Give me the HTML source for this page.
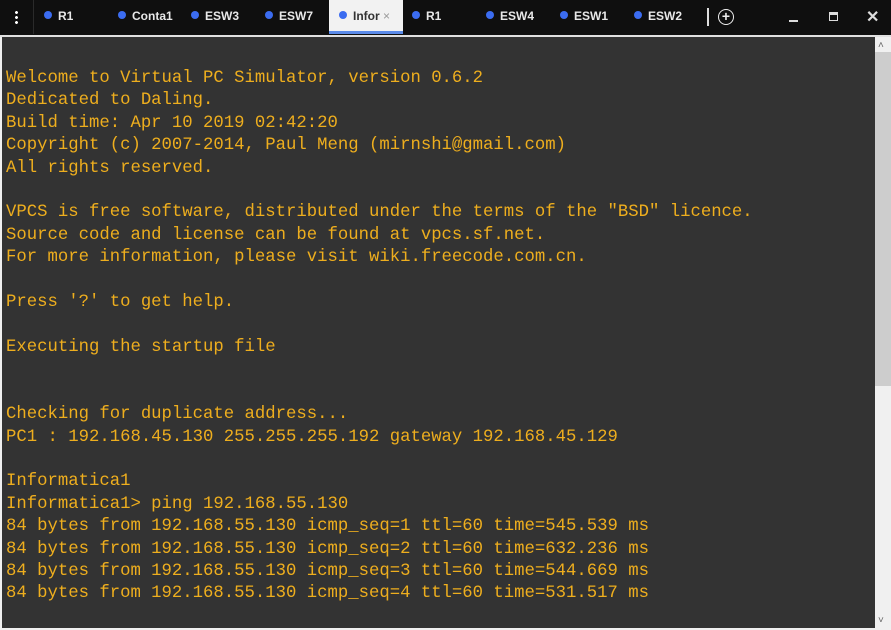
<!DOCTYPE html>
<html><head><style>
*{margin:0;padding:0;box-sizing:border-box}
body{width:891px;height:630px;background:#0f0f0f;overflow:hidden;position:relative;font-family:"Liberation Sans",sans-serif}
.bar{position:absolute;left:0;top:0;width:891px;height:34px;background:#0f0f0f}
.tab{position:absolute;top:0;height:34px;color:#e8e8e8;font-size:12px;font-weight:bold;line-height:33px}
.tab i{display:inline-block;width:8px;height:8px;border-radius:50%;background:#3b6cf0;margin-right:6px;vertical-align:1px}
.act{background:#f2f2f2;color:#333;border-bottom:3px solid #5a8ae8;padding-left:10px;width:74px}
.term{position:absolute;left:0;top:35px;width:891px;height:595px;background:#f0f0f0;border-top:2px solid #e0e0e0}
.scr{position:absolute;left:2px;top:37px;width:873px;height:591px;background:#333}
pre{position:absolute;left:6px;top:68px;font-family:"Liberation Mono",monospace;font-size:17.3px;line-height:22.4px;color:#eeae1e}
</style></head><body>
<div class="bar">
<div style="position:absolute;left:15px;top:10px;width:3px;height:14px;background:radial-gradient(circle,#fff 1.3px,transparent 1.6px) 0 0/3px 5px"></div>
<div style="position:absolute;left:33px;top:0;width:1px;height:34px;background:#2a2a2a"></div>
<div class="tab" style="left:44px"><i></i>R1</div>
<div class="tab" style="left:118px"><i></i>Conta1</div>
<div class="tab" style="left:191px"><i></i>ESW3</div>
<div class="tab" style="left:265px"><i></i>ESW7</div>
<div class="tab act" style="left:329px"><i></i>Infor <span style="color:#999;font-weight:normal">×</span></div>
<div class="tab" style="left:412px"><i></i>R1</div>
<div class="tab" style="left:486px"><i></i>ESW4</div>
<div class="tab" style="left:560px"><i></i>ESW1</div>
<div class="tab" style="left:634px"><i></i>ESW2</div>
<div style="position:absolute;left:707px;top:8px;width:2px;height:18px;background:#ddd"></div>
<div style="position:absolute;left:718px;top:9px;width:16px;height:16px;border:1.5px solid #eee;border-radius:50%;color:#eee;font-size:14px;line-height:12px;text-align:center;font-weight:bold">+</div>
<div style="position:absolute;left:789px;top:20px;width:9px;height:2px;background:#ddd"></div>
<div style="position:absolute;left:829px;top:12px;width:9px;height:9px;border:1.5px solid #ddd;border-top-width:3px"></div>
<div style="position:absolute;left:866px;top:7px;color:#ddd;font-size:16px;font-weight:bold">✕</div>
</div>
<div class="term"></div>
<div class="scr"></div>
<div style="position:absolute;left:875px;top:52px;width:16px;height:334px;background:#cdcdcd"></div>
<div style="position:absolute;left:878px;top:40px;color:#666;font-size:10px">&#x2C4;</div>
<div style="position:absolute;left:878px;top:615px;color:#666;font-size:10px">&#x2C5;</div>
<pre>Welcome to Virtual PC Simulator, version 0.6.2
Dedicated to Daling.
Build time: Apr 10 2019 02:42:20
Copyright (c) 2007-2014, Paul Meng (mirnshi@gmail.com)
All rights reserved.

VPCS is free software, distributed under the terms of the "BSD" licence.
Source code and license can be found at vpcs.sf.net.
For more information, please visit wiki.freecode.com.cn.

Press '?' to get help.

Executing the startup file


Checking for duplicate address...
PC1 : 192.168.45.130 255.255.255.192 gateway 192.168.45.129

Informatica1
Informatica1&gt; ping 192.168.55.130
84 bytes from 192.168.55.130 icmp_seq=1 ttl=60 time=545.539 ms
84 bytes from 192.168.55.130 icmp_seq=2 ttl=60 time=632.236 ms
84 bytes from 192.168.55.130 icmp_seq=3 ttl=60 time=544.669 ms
84 bytes from 192.168.55.130 icmp_seq=4 ttl=60 time=531.517 ms</pre>
</body></html>
